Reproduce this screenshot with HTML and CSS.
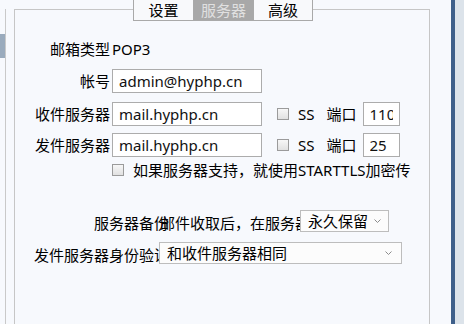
FILE: index.html
```html
<!DOCTYPE html>
<html lang="zh-CN">
<head>
<meta charset="utf-8">
<title>服务器设置</title>
<link rel="stylesheet" href="styles.css">
</head>
<body>
<div class="app">
  <div class="sidebar"><div class="side-marker"></div></div>
  <div class="main">
    <div class="tabs">
      <div class="tab">设置</div>
      <div class="tab active">服务器</div>
      <div class="tab">高级</div>
    </div>
    <div class="panel">
      <div class="row row-type">
        <span class="label">邮箱类型</span><span class="value">POP3</span>
      </div>
      <div class="row row-account">
        <span class="label">帐号</span>
        <div class="input wide">admin@hyphp.cn</div>
      </div>
      <div class="row row-in">
        <span class="label">收件服务器</span>
        <div class="input wide">mail.hyphp.cn</div>
        <span class="check"></span>
        <span class="ssl">SS</span>
        <span class="port-label">端口</span>
        <div class="input port"><span class="clip">110</span></div>
      </div>
      <div class="row row-out">
        <span class="label">发件服务器</span>
        <div class="input wide">mail.hyphp.cn</div>
        <span class="check"></span>
        <span class="ssl">SS</span>
        <span class="port-label">端口</span>
        <div class="input port"><span class="clip">25</span></div>
      </div>
      <div class="row row-tls">
        <span class="check"></span>
        <span class="tls-text">如果服务器支持，就使用STARTTLS加密传</span>
      </div>
      <div class="row row-backup">
        <span class="bk-label">服务器备份</span>
        <span class="bk-text">邮件收取后，在服务器</span>
        <div class="select short">
          <span>永久保留</span>
          <svg class="chev" width="7" height="5" viewBox="0 0 7 5"><path d="M0.5 0.5 L3.5 3.5 L6.5 0.5" stroke="#8c8c8c" stroke-width="1" fill="none"/></svg>
        </div>
      </div>
      <div class="row row-auth">
        <span class="auth-label">发件服务器身份验证</span>
        <div class="select long">
          <span>和收件服务器相同</span>
          <svg class="chev" width="7" height="5" viewBox="0 0 7 5"><path d="M0.5 0.5 L3.5 3.5 L6.5 0.5" stroke="#8c8c8c" stroke-width="1" fill="none"/></svg>
        </div>
      </div>
    </div>
  </div>
  <div class="scrollbar"></div>
  <div class="edge"></div>
</div>
</body>
</html>
```
FILE: styles.css
```css
body {
  margin: 0;
  width: 464px;
  height: 324px;
  overflow: hidden;
  background: #f7f9fd;
  font-family: "Noto Sans", "Noto Sans CJK SC", sans-serif;
  font-size: 15px;
  color: #000;
}

.app {
  display: flex;
  height: 324px;
  overflow: hidden;
}

.sidebar {
  flex: none;
  width: 5px;
  margin-top: 9px;
  border-right: 1px solid #c9c9c9;
}

.side-marker {
  margin-top: 25px;
  height: 24px;
  background: #9aabbd;
}

.main {
  flex: none;
  width: 416px;
  margin-left: 8px;
  display: flex;
  flex-direction: column;
}

.tabs {
  display: flex;
  margin-top: -1px;
  padding-left: 119px;
  position: relative;
  z-index: 1;
}

.tab {
  width: 59px;
  height: 20px;
  border: 1px solid #a9a9a9;
  background: #f8f9fb;
  text-align: center;
  line-height: 20px;
}

.tab + .tab {
  margin-left: -1px;
}

.tab:last-child {
  width: 58px;
}

.tab.active {
  background: #a8a8a8;
  color: #e0e0e0;
}

.panel {
  flex: none;
  box-sizing: border-box;
  height: 315px;
  margin-top: -12px;
  padding-top: 27px;
  border: 1px solid #c6c6c6;
  border-bottom: none;
}

.row {
  display: flex;
  align-items: center;
  height: 24px;
  line-height: 22px;
}

.label {
  flex: none;
  box-sizing: border-box;
  width: 97px;
  padding-right: 2px;
  text-align: right;
  white-space: nowrap;
}

.row-account { margin-top: 8px; }
.row-in { margin-top: 9px; }
.row-out { margin-top: 7px; }
.row-tls { margin-top: 1px; padding-left: 97px; }
.row-backup { margin-top: 27px; padding-left: 79px; align-items: flex-start; }
.row-auth { margin-top: 8px; padding-left: 19px; align-items: flex-start; }

.input {
  flex: none;
  box-sizing: border-box;
  height: 24px;
  border: 1px solid #acacac;
  background: #fff;
  padding: 0 6px;
  white-space: nowrap;
  overflow: hidden;
  color: #111;
}

.input.wide { width: 150px; }

.input.port {
  width: 37px;
  margin-left: 6px;
}

.clip {
  display: block;
  width: 23px;
  overflow: hidden;
}

.check {
  flex: none;
  box-sizing: border-box;
  width: 12px;
  height: 12px;
  border: 1px solid #9b9b9b;
  background: linear-gradient(#f7f7f7, #e1e1e1);
  margin-left: 15px;
}

.row-tls .check { margin-left: 0; }

.ssl { margin-left: 9px; }
.port-label { margin-left: 12px; }

.tls-text {
  margin-left: 9px;
  white-space: nowrap;
}

.bk-label,
.bk-text,
.auth-label {
  flex: none;
  white-space: nowrap;
  line-height: 24px;
  padding-top: 2px;
}

.bk-label { width: 66px; }
.bk-text { width: 140px; }
.auth-label { width: 125px; }

.select {
  flex: none;
  position: relative;
  z-index: 1;
  box-sizing: border-box;
  height: 22px;
  margin-top: 1px;
  border: 1px solid #bdbdbd;
  background: #fcfcfc;
  display: flex;
  align-items: center;
  justify-content: space-between;
  padding-left: 7px;
  line-height: 20px;
  white-space: nowrap;
}

.select.short { width: 89px; padding-right: 7px; }
.select.long { width: 243px; padding-right: 9px; }

.chev { flex: none; }

.scrollbar {
  flex: none;
  width: 4px;
  margin-left: 21px;
  background: #3e5f8a;
}

.edge {
  flex: none;
  width: 9px;
  background: #dce3ea;
}
```
